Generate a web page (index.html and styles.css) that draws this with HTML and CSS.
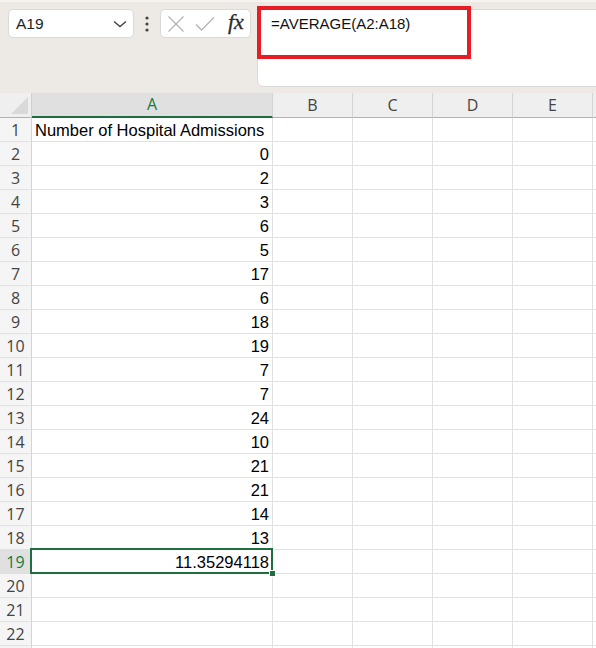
FILE: index.html
```html
<!DOCTYPE html>
<html>
<head>
<meta charset="utf-8">
<link rel="stylesheet" href="styles.css">
</head>
<body>
<div class="toolbar">
  <div class="namebox">
    <span class="name">A19</span>
    <svg class="chev" width="14" height="8" viewBox="0 0 14 8"><path d="M1 1.5 L7 6.5 L13 1.5" fill="none" stroke="#444" stroke-width="1.4"/></svg>
  </div>
  <div class="dots">
    <svg width="6" height="18" viewBox="0 0 6 18"><circle cx="3" cy="3" r="1.6" fill="#444"/><circle cx="3" cy="9" r="1.6" fill="#444"/><circle cx="3" cy="15" r="1.6" fill="#444"/></svg>
  </div>
  <div class="fbtns">
    <svg class="ico" width="18" height="18" viewBox="0 0 18 18"><path d="M1.5 1.5 L16.5 16.5 M16.5 1.5 L1.5 16.5" stroke="#b5b5b5" stroke-width="1.3" fill="none"/></svg>
    <svg class="ico" width="20" height="16" viewBox="0 0 20 16"><path d="M1 8.5 L6.5 14 L19 1.5" stroke="#b5b5b5" stroke-width="1.3" fill="none"/></svg>
    <span class="fx">fx</span>
  </div>
  <div class="formula">
    <span class="ftext">=AVERAGE(A2:A18)</span>
    <div class="annot"></div>
  </div>
</div>
<div class="sheet">
  <div class="corner"><svg width="17" height="17" viewBox="0 0 17 17"><path d="M17 0 L17 17 L0 17 Z" fill="#d9d9d9"/></svg></div>
  <div class="ch sel">A</div><div class="ch">B</div><div class="ch">C</div><div class="ch">D</div><div class="ch">E</div><div class="ch last"></div>

  <div class="rh">1</div><div class="c">Number of Hospital Admissions</div><div class="c"></div><div class="c"></div><div class="c"></div><div class="c"></div><div class="c last"></div>
  <div class="rh">2</div><div class="c n">0</div><div class="c"></div><div class="c"></div><div class="c"></div><div class="c"></div><div class="c last"></div>
  <div class="rh">3</div><div class="c n">2</div><div class="c"></div><div class="c"></div><div class="c"></div><div class="c"></div><div class="c last"></div>
  <div class="rh">4</div><div class="c n">3</div><div class="c"></div><div class="c"></div><div class="c"></div><div class="c"></div><div class="c last"></div>
  <div class="rh">5</div><div class="c n">6</div><div class="c"></div><div class="c"></div><div class="c"></div><div class="c"></div><div class="c last"></div>
  <div class="rh">6</div><div class="c n">5</div><div class="c"></div><div class="c"></div><div class="c"></div><div class="c"></div><div class="c last"></div>
  <div class="rh">7</div><div class="c n">17</div><div class="c"></div><div class="c"></div><div class="c"></div><div class="c"></div><div class="c last"></div>
  <div class="rh">8</div><div class="c n">6</div><div class="c"></div><div class="c"></div><div class="c"></div><div class="c"></div><div class="c last"></div>
  <div class="rh">9</div><div class="c n">18</div><div class="c"></div><div class="c"></div><div class="c"></div><div class="c"></div><div class="c last"></div>
  <div class="rh">10</div><div class="c n">19</div><div class="c"></div><div class="c"></div><div class="c"></div><div class="c"></div><div class="c last"></div>
  <div class="rh">11</div><div class="c n">7</div><div class="c"></div><div class="c"></div><div class="c"></div><div class="c"></div><div class="c last"></div>
  <div class="rh">12</div><div class="c n">7</div><div class="c"></div><div class="c"></div><div class="c"></div><div class="c"></div><div class="c last"></div>
  <div class="rh">13</div><div class="c n">24</div><div class="c"></div><div class="c"></div><div class="c"></div><div class="c"></div><div class="c last"></div>
  <div class="rh">14</div><div class="c n">10</div><div class="c"></div><div class="c"></div><div class="c"></div><div class="c"></div><div class="c last"></div>
  <div class="rh">15</div><div class="c n">21</div><div class="c"></div><div class="c"></div><div class="c"></div><div class="c"></div><div class="c last"></div>
  <div class="rh">16</div><div class="c n">21</div><div class="c"></div><div class="c"></div><div class="c"></div><div class="c"></div><div class="c last"></div>
  <div class="rh">17</div><div class="c n">14</div><div class="c"></div><div class="c"></div><div class="c"></div><div class="c"></div><div class="c last"></div>
  <div class="rh">18</div><div class="c n">13</div><div class="c"></div><div class="c"></div><div class="c"></div><div class="c"></div><div class="c last"></div>
  <div class="rh sel">19</div><div class="c n active">11.35294118<span class="handle"></span></div><div class="c"></div><div class="c"></div><div class="c"></div><div class="c"></div><div class="c last"></div>
  <div class="rh">20</div><div class="c"></div><div class="c"></div><div class="c"></div><div class="c"></div><div class="c"></div><div class="c last"></div>
  <div class="rh">21</div><div class="c"></div><div class="c"></div><div class="c"></div><div class="c"></div><div class="c"></div><div class="c last"></div>
  <div class="rh">22</div><div class="c"></div><div class="c"></div><div class="c"></div><div class="c"></div><div class="c"></div><div class="c last"></div>
  <div class="rh"></div><div class="c"></div><div class="c"></div><div class="c"></div><div class="c"></div><div class="c"></div><div class="c last"></div>
</div>
</body>
</html>
```

FILE: styles.css
```css
html, body {
  margin: 0;
  padding: 0;
  background: #ffffff;
  overflow: hidden;
}
body {
  width: 596px;
  height: 648px;
  font-family: "Liberation Sans", Arial, sans-serif;
}
.toolbar {
  box-sizing: border-box;
  height: 93px;
  background: #edeae5;
  border-top: 2px solid #f6f4f1;
  display: flex;
  align-items: flex-start;
  padding: 7px 0 0 8px;
  overflow: hidden;
}
.namebox {
  box-sizing: border-box;
  width: 126px;
  height: 29px;
  background: #ffffff;
  border: 1px solid #dcdad6;
  border-radius: 5px;
  display: flex;
  align-items: center;
  justify-content: space-between;
  padding: 0 6px 0 7px;
}
.name {
  font-size: 15.5px;
  color: #222;
}
.chev {
  display: block;
  margin-top: 1px;
}
.dots {
  width: 26px;
  height: 29px;
  display: flex;
  align-items: center;
  justify-content: center;
}
.dots svg { display: block; }
.fbtns {
  box-sizing: border-box;
  width: 91px;
  height: 29px;
  background: #ffffff;
  border: 1px solid #dcdad6;
  border-radius: 5px;
  display: flex;
  align-items: center;
  padding: 0 0 0 6px;
  gap: 10px;
}
.ico { display: block; }
.fx {
  font-family: "Liberation Serif", "Times New Roman", serif;
  font-style: italic;
  font-size: 22px;
  color: #2a2a2a;
  line-height: 1;
  margin-left: 3px;
  margin-top: -3px;
  -webkit-text-stroke: 0.3px #2a2a2a;
}
.formula {
  position: relative;
  box-sizing: border-box;
  margin-left: 6px;
  flex: 1;
  margin-right: -10px;
  height: 78px;
  background: #ffffff;
  border: 1px solid #dcdad6;
  border-radius: 6px 0 0 6px;
  padding: 4px 0 0 13px;
}
.ftext {
  font-size: 15px;
  line-height: 20px;
  color: #111;
}
.annot {
  position: absolute;
  left: -1px;
  top: -4px;
  width: 214px;
  height: 53px;
  box-sizing: border-box;
  border: 4px solid #e81c24;
}
.sheet {
  display: grid;
  grid-template-columns: 32px 241px 80px 80px 80px 80px 10px;
  grid-template-rows: 25px repeat(23, 24px);
}
.sheet > div {
  box-sizing: border-box;
}
.corner {
  background: #efefef;
  border-right: 1px solid #d0d0d0;
  border-bottom: 1px solid #b2b2b2;
  display: flex;
  align-items: flex-end;
  justify-content: flex-end;
  padding: 0 3px 3px 0;
}
.corner svg { display: block; }
.ch {
  background: #efefef;
  border-right: 1px solid #d4d4d4;
  border-bottom: 1px solid #b2b2b2;
  font-family: "Open Sans", "Liberation Sans", sans-serif;
  font-size: 16px;
  color: #444;
  text-align: center;
  line-height: 24px;
}
.ch.sel {
  background: #e0e0e0;
  color: #107c41;
  border-bottom: 2px solid #1e6e42;
  line-height: 23px;
}
.rh {
  background: #f5f5f5;
  border-right: 1px solid #d4d4d4;
  border-bottom: 1px solid #e1e1e1;
  font-family: "Open Sans", "Liberation Sans", sans-serif;
  font-size: 16px;
  color: #444;
  text-align: center;
  line-height: 24px;
}
.rh.sel {
  background: #e0e0e0;
  color: #107c41;
}
.c {
  border-right: 1px solid #e1e1e1;
  border-bottom: 1px solid #e1e1e1;
  font-size: 16.5px;
  color: #000;
  line-height: 25px;
  padding: 0 3px;
  white-space: nowrap;
}
.c.n { text-align: right; }
.c.last { border-right: none; }
.c.active { position: relative; }
.c.active::before {
  content: "";
  position: absolute;
  left: -2px;
  top: -2px;
  right: -1px;
  bottom: -1px;
  border: 2px solid #1e6e42;
}
.handle {
  position: absolute;
  right: -4px;
  bottom: -4px;
  width: 5px;
  height: 5px;
  background: #1e6e42;
  border: 1px solid #ffffff;
}
```
